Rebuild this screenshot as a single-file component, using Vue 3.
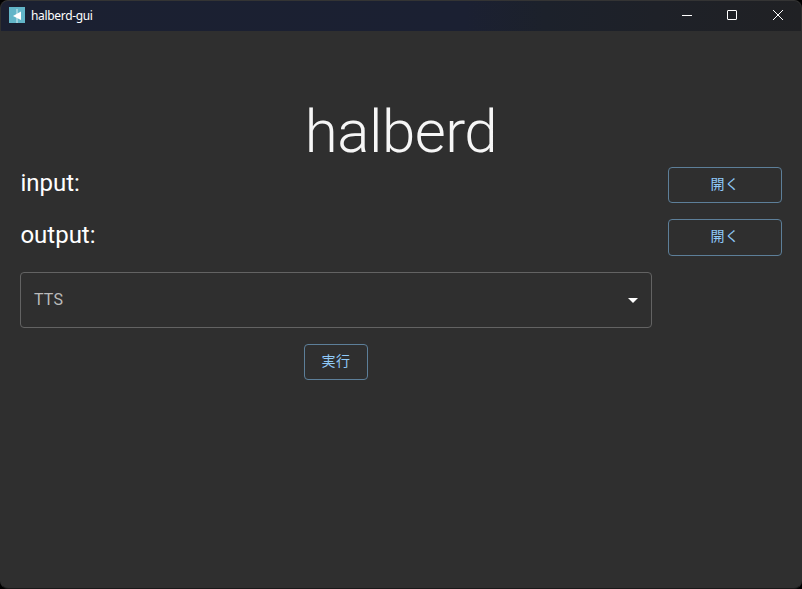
<script setup>
const paths = ['input:', 'output:']
</script>

<template>
  <div class="window">
    <header class="titlebar">
      <svg class="logo" width="16" height="16" viewBox="0 0 16 16">
        <rect width="16" height="16" fill="#62b5c8" />
        <rect x="7" y="2" width="2" height="14" fill="#9bd0dc" />
        <path d="M4 9 12 4.5V13Z" fill="#fff" />
      </svg>
      <span class="name">halberd-gui</span>
      <div class="controls">
        <svg width="46" height="30" viewBox="0 0 46 30"><path d="M18 15.5h10" /></svg>
        <svg width="45" height="30" viewBox="0 0 45 30"><rect x="17.5" y="10.5" width="9" height="9" rx="0.5" /></svg>
        <svg width="46" height="30" viewBox="0 0 46 30"><path d="m18 10 10 10M28 10 18 20" /></svg>
      </div>
    </header>
    <main class="content">
      <h1>halberd</h1>
      <div class="form">
        <template v-for="label in paths" :key="label">
          <div class="label">{{ label }}</div>
          <button class="btn">開く</button>
        </template>
        <div class="select">
          <span>TTS</span>
          <svg width="24" height="24" viewBox="0 0 24 24"><path d="m7 10 5 5 5-5z" fill="#fff" /></svg>
        </div>
        <button class="btn run">実行</button>
      </div>
    </main>
  </div>
</template>

<style>
body {
  background: #000;
}
</style>

<style scoped>
.window {
  box-sizing: border-box;
  height: 589px;
  display: flex;
  flex-direction: column;
  border: 1px solid #2f2f2f;
  border-top-color: #343434;
  border-bottom-color: #1a1a1a;
  border-radius: 8px;
  overflow: hidden;
  background: #2f2f2f;
  font-family: Roboto, "Noto Sans CJK JP", sans-serif;
}
.titlebar {
  height: 30px;
  display: flex;
  align-items: center;
  padding-left: 8px;
  background: linear-gradient(90deg, #1b2031 0%, #1b2032 58%, #1c212b 68%, #1e2128 82%, #202124 100%);
}
.logo {
  margin-top: -2px;
}
.name {
  margin-left: 6px;
  color: #fff;
  font: 12px/16px "Noto Sans", sans-serif;
  letter-spacing: -0.33px;
}
.controls {
  display: flex;
  margin: -2px 0 0 auto;
}
.controls svg {
  fill: none;
  stroke: #fff;
}
.content {
  padding: 65px 19px 0;
}
h1 {
  margin: 0;
  text-align: center;
  color: #f6f6f6;
  font-size: 60px;
  font-weight: 300;
  line-height: 72px;
  letter-spacing: -0.5px;
}
.form {
  display: grid;
  grid-template-columns: 632px 114px;
  grid-template-rows: 36px 37px 56px 36px;
  gap: 16px;
  margin-top: -1px;
}
.label {
  padding-left: 0.4px;
  color: #fff;
  font-size: 24px;
  line-height: 32px;
}
.btn {
  box-sizing: border-box;
  padding: 0 0 3px;
  border: 1px solid #5d7f99;
  border-radius: 4px;
  background: transparent;
  color: #90caf9;
  font: 400 14px/24px Roboto, "Noto Sans CJK JP", sans-serif;
  letter-spacing: 0.4px;
}
.select {
  box-sizing: border-box;
  display: flex;
  align-items: center;
  justify-content: space-between;
  padding: 0 6px 0 13px;
  border: 1px solid #636363;
  border-radius: 4px;
  color: #bababa;
  font-size: 16px;
  letter-spacing: 0.15px;
}
.select span {
  padding-bottom: 2px;
}
.run {
  grid-column: 1;
  grid-row: 4;
  justify-self: center;
  width: 64px;
}
</style>
